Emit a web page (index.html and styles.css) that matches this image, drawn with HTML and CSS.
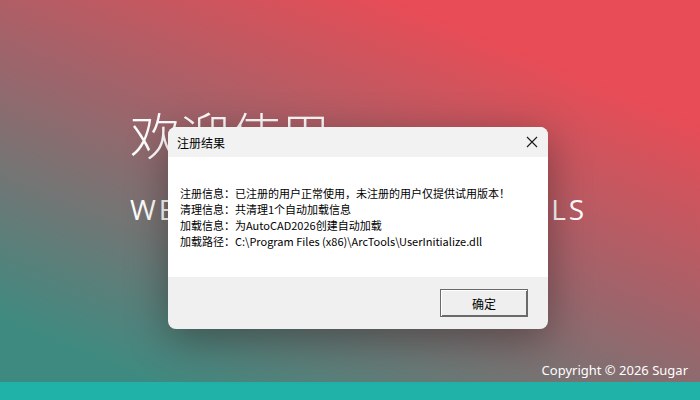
FILE: index.html
```html
<!DOCTYPE html>
<html lang="zh-CN">
<head>
    <meta charset="UTF-8">
    <meta name="viewport" content="width=device-width, initial-scale=1.0">
    <title>ArcTools</title>
    <link rel="stylesheet" href="styles.css">
</head>
<body>
    <main class="page">
        <section class="hero">
            <h1 class="hero-title">欢迎使用</h1>
            <p class="hero-sub">WELCOME TO USE ARCTOOLS</p>
        </section>
        <footer class="page-footer">
            <p class="copyright">Copyright © 2026 Sugar</p>
            <div class="footer-bar"></div>
        </footer>
    </main>

    <!-- register result message box -->
    <div class="dialog">
        <div class="dialog-title">
            <span>注册结果</span>
            <svg class="dialog-close" width="12" height="12" viewBox="0 0 12 12">
                <path d="M1 1L11 11M11 1L1 11" stroke="#1a1a1a" stroke-width="1.1" fill="none"/>
            </svg>
        </div>
        <div class="dialog-body">
            <p>注册信息：已注册的用户正常使用，未注册的用户仅提供试用版本！</p>
            <p>清理信息：共清理1个自动加载信息</p>
            <p>加载信息：为AutoCAD2026创建自动加载</p>
            <p>加载路径：C:\Program Files (x86)\ArcTools\UserInitialize.dll</p>
        </div>
        <div class="dialog-footer">
            <button class="dialog-btn">确定</button>
        </div>
    </div>
</body>
</html>
```

FILE: styles.css
```css
body {
    margin: 0;
    padding: 0;
    font-family: "Noto Sans CJK SC", sans-serif;
    overflow: hidden;
}
.page {
    width: 700px;
    height: 400px;
    display: flex;
    flex-direction: column;
    background: linear-gradient(22deg, #3f8a80 12%, #a0636a 52%, #e84c56 82%);
    color: white;
}
.hero {
    padding: 98px 0 0 130px;
}
.hero-title {
    margin: 0;
    font-size: 50px;
    font-weight: 300;
    line-height: 70px;
}
.hero-sub {
    margin: 23px 0 0;
    font-family: "Open Sans", sans-serif;
    font-weight: 400;
    font-size: 28px;
    line-height: 36px;
    letter-spacing: 3px;
}
.page-footer {
    margin-top: auto;
}
.copyright {
    margin: 0 12px 2px 0;
    text-align: right;
    font-family: "Noto Sans", sans-serif;
    font-size: 13px;
    line-height: 20px;
}
.footer-bar {
    height: 18px;
    background-color: #20b1a8;
}
.dialog {
    position: absolute;
    top: 127px;
    left: 168px;
    width: 380px;
    border-radius: 8px;
    overflow: hidden;
    background-color: #f0f0f0;
    color: #000;
    box-shadow: 0 10px 40px rgba(0, 0, 0, 0.35);
    font-size: 12px;
}
.dialog-title {
    height: 30px;
    display: flex;
    align-items: center;
    justify-content: space-between;
    padding: 0 9px;
    background-color: #f2f2f2;
}
.dialog-close {
    margin-right: 1px;
}
.dialog-body {
    height: 120px;
    padding: 28px 12px 0;
    box-sizing: border-box;
    background-color: white;
    font-size: 11px;
}
.dialog-body p {
    margin: 0;
    line-height: 16px;
    white-space: nowrap;
}
.dialog-footer {
    height: 52px;
    display: flex;
    align-items: center;
    justify-content: flex-end;
    padding-right: 20px;
}
.dialog-btn {
    width: 88px;
    height: 28px;
    padding: 0;
    font-family: inherit;
    font-size: 12px;
    color: #000;
    background-color: #efefef;
    border: 1px solid #6a6a6a;
    box-shadow: inset 1px 1px #ffffff, inset -1px -1px #6a6a6a;
}
```
